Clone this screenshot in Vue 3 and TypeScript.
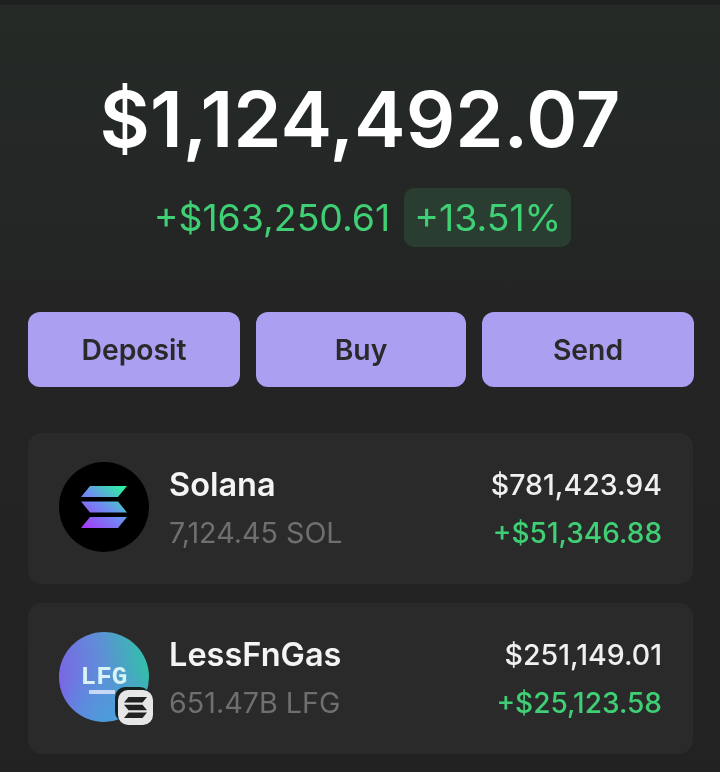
<script setup lang="ts">
interface Token {
  name: string;
  amount: string;
  value: string;
  change: string;
  kind: "sol" | "lfg";
}

const actions = ["Deposit", "Buy", "Send"];

const tokens: Token[] = [
  { name: "Solana", amount: "7,124.45 SOL", value: "$781,423.94", change: "+$51,346.88", kind: "sol" },
  { name: "LessFnGas", amount: "651.47B LFG", value: "$251,149.01", change: "+$25,123.58", kind: "lfg" },
];
</script>

<template>
  <div class="screen">
    <div class="topbar"></div>
    <section class="balance">
      <h1 class="total">$1,124,492.07</h1>
      <div class="delta">
        <span class="delta-abs">+$163,250.61</span>
        <span class="delta-pct">+13.51%</span>
      </div>
    </section>

    <div class="actions">
      <button v-for="a in actions" :key="a" class="action">{{ a }}</button>
    </div>

    <ul class="tokens">
      <li v-for="t in tokens" :key="t.name" class="token">
        <div class="logo" :class="t.kind">
          <svg v-if="t.kind === 'sol'" class="sol-mark" viewBox="0 0 46 42">
            <defs>
              <linearGradient id="solGrad" gradientUnits="userSpaceOnUse" x1="6" y1="42" x2="40" y2="0">
                <stop offset="0" stop-color="#a03ff5" />
                <stop offset="0.5" stop-color="#6f8cf2" />
                <stop offset="1" stop-color="#2cf0a2" />
              </linearGradient>
            </defs>
            <path fill="url(#solGrad)" d="M9 0H46L37 11H0Z" />
            <path fill="url(#solGrad)" d="M0 15.5H37L46 26.5H9Z" />
            <path fill="url(#solGrad)" d="M9 31H46L37 42H0Z" />
          </svg>
          <template v-else>
            <span class="lfg-text">LFG</span>
            <span class="lfg-bar"></span>
            <span class="chain">
              <svg viewBox="0 0 46 42" class="chain-mark">
                <path fill="#222" d="M9 0H46L37 11H0Z" />
                <path fill="#222" d="M0 15.5H37L46 26.5H9Z" />
                <path fill="#222" d="M9 31H46L37 42H0Z" />
              </svg>
            </span>
          </template>
        </div>
        <div class="info">
          <div class="name">{{ t.name }}</div>
          <div class="amount">{{ t.amount }}</div>
        </div>
        <div class="figures">
          <div class="value">{{ t.value }}</div>
          <div class="change">{{ t.change }}</div>
        </div>
      </li>
    </ul>
  </div>
</template>

<style>
html,
body {
  margin: 0;
  background: #222322;
}
</style>

<style scoped>
.screen {
  width: 720px;
  height: 772px;
  overflow: hidden;
  box-sizing: border-box;
  font-family: Inter, "Liberation Sans", sans-serif;
  background: linear-gradient(180deg, #252a27 0, #242725 200px, #232423 320px, #222222 772px);
  filter: blur(0.5px);
}
.topbar {
  height: 5px;
  background: #1e201f;
}
.balance {
  display: flex;
  flex-direction: column;
  align-items: center;
  padding-top: 68px;
}
.total {
  margin: 0;
  font-size: 77.5px;
  line-height: 92px;
  font-weight: 600;
  color: #fff;
}
.delta {
  display: flex;
  align-items: center;
  gap: 14px;
  margin-top: 23px;
  margin-left: 5px;
  font-size: 37.4px;
  color: #3fcf74;
}
.delta-pct {
  height: 59px;
  line-height: 59px;
  padding: 0 10px;
  border-radius: 10px;
  background: #2a3d31;
}
.actions {
  display: grid;
  grid-template-columns: 212px 210px 212px;
  gap: 16px;
  margin: 65px 0 0 28px;
}
.action {
  height: 75px;
  border: 0;
  border-radius: 12px;
  background: #ab9ff2;
  color: #2a2a2a;
  font: 600 28.3px Inter, "Liberation Sans", sans-serif;
}
.tokens {
  list-style: none;
  margin: 46px 27px 0 28px;
  padding: 0;
  display: flex;
  flex-direction: column;
  gap: 19px;
}
.token {
  display: flex;
  align-items: center;
  height: 151px;
  padding: 0 31px;
  border-radius: 14px;
  background: #2a2a2a;
}
.logo {
  position: relative;
  display: flex;
  align-items: center;
  justify-content: center;
  flex: none;
  width: 90px;
  height: 90px;
  margin-bottom: 4px;
  border-radius: 50%;
}
.logo.sol {
  background: #000;
}
.sol-mark {
  width: 46px;
  height: 42px;
}
.logo.lfg {
  flex-direction: column;
  background:
    radial-gradient(circle at 55% 105%, #4b9edb 0, rgba(75, 158, 219, 0) 60%),
    linear-gradient(80deg, #7f60e8 0, #5f8ed8 50%, #2cc6a4 100%);
}
.lfg-text {
  margin-top: 6px;
  font: 700 26px/24px "Liberation Mono", monospace;
  color: #d8f3f6;
}
.lfg-bar {
  width: 26px;
  height: 4px;
  margin-top: 1px;
  margin-right: 4px;
  background: #c9d8f5;
}
.chain {
  position: absolute;
  right: -4px;
  bottom: -3px;
  width: 35px;
  height: 35px;
  display: flex;
  align-items: center;
  justify-content: center;
  border-radius: 10px;
  background: #e6e6e6;
  box-shadow: -3px -3px 0 0 #15201f;
}
.chain-mark {
  width: 23px;
  height: 21px;
}
.info {
  flex: 1;
  margin-left: 20px;
  padding-bottom: 2px;
}
.name {
  font-size: 32.5px;
  line-height: 36px;
  font-weight: 600;
  color: #f4f4f4;
}
.amount {
  margin-top: 14px;
  font-size: 28.7px;
  line-height: 32px;
  color: #6f6f6f;
}
.figures {
  text-align: right;
  padding-bottom: 2px;
}
.value {
  font-size: 28.5px;
  line-height: 36px;
  font-weight: 500;
  color: #f0f0f0;
}
.change {
  margin-top: 14px;
  font-size: 28px;
  line-height: 32px;
  font-weight: 500;
  color: #3fcf74;
}
</style>
